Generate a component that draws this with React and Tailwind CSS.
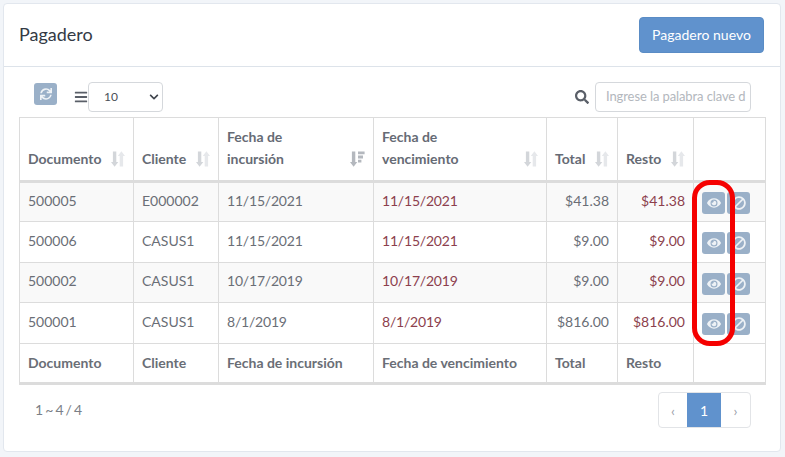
import React from "react";
import { FaSync, FaBars, FaSearch, FaEye, FaBan, FaChevronDown } from "react-icons/fa";

const rows = [
  { doc: "500005", client: "E000002", date: "11/15/2021", due: "11/15/2021", total: "$41.38", rest: "$41.38" },
  { doc: "500006", client: "CASUS1", date: "11/15/2021", due: "11/15/2021", total: "$9.00", rest: "$9.00" },
  { doc: "500002", client: "CASUS1", date: "10/17/2019", due: "10/17/2019", total: "$9.00", rest: "$9.00" },
  { doc: "500001", client: "CASUS1", date: "8/1/2019", due: "8/1/2019", total: "$816.00", rest: "$816.00" },
];

// both arrows of the sort glyph, down one a bit darker
const SortIcon = () => (
  <svg width="14" height="16" viewBox="0 0 14 16" className="block shrink-0">
    <path d="M1.9 0.5h3.4v10.5h2L3.6 15.7 0 11h1.9z" fill="#d3d6da" />
    <path d="M8.7 15.5h3.4V5h1.9L10.4 0.3 6.8 5h1.9z" fill="#e6e8eb" />
  </svg>
);

const SortDescIcon = () => (
  <svg width="15" height="16" viewBox="0 0 15 16" className="block shrink-0">
    <path d="M1.9 0.5h3.4v10.5h2L3.6 15.7 0 11h1.9z" fill="#b4b8be" />
    <path d="M8 0.5h6.6v2.8H8zM8 4.6h5v2.8H8zM8 8.7h3.4v2.8H8z" fill="#b4b8be" />
  </svg>
);

const HeadCell = ({ children, icon = <SortIcon /> }) => (
  <th className="border border-[#dcdcdc] border-b-[3px] px-2 pb-[10px] pt-0 align-bottom text-[14px] font-bold leading-[22px] text-[#666b75]">
    <div className="flex items-end justify-between">
      <span className="text-left">{children}</span>
      <span className="pb-[3px] pl-1">{icon}</span>
    </div>
  </th>
);

const ActionButton = ({ children }) => (
  <span className="flex h-[22px] w-[23px] items-center justify-center rounded-[3px] bg-[#9ab0c8] text-[#eef2f6]">
    {children}
  </span>
);

export default function App() {
  return (
    <div className="relative h-[457px] w-[785px] overflow-hidden bg-[#f2f5f9] pl-[3px] pt-[3px] font-['Lato',sans-serif]">
      <div className="h-[449px] w-[778px] rounded-[4px] border border-[#e2e7ee] bg-white">
        <div className="flex h-[63px] items-center justify-between border-b border-[#dde3ea] pl-[15px] pr-[16px]">
          <h1 className="mt-[-2px] text-[18px] font-normal text-[#343a45]">Pagadero</h1>
          <button className="mt-[-1px] h-[36px] w-[125px] rounded-[4px] border border-[#5a8cc5] bg-[#6092cd] text-[14px] text-white">
            Pagadero nuevo
          </button>
        </div>

        <div className="flex h-[50px] items-end justify-between pb-[5px] pl-[30px] pr-[29px]">
          <div className="flex items-center">
            <span className="mb-[6px] mr-[17px] flex h-[22px] w-[23px] items-center justify-center rounded-[3px] bg-[#9ab0c8] text-[#eef2f6]">
              <FaSync size={12} />
            </span>
            <FaBars size={14} className="text-[#5a5f68]" />
            <div className="flex h-[30px] w-[75px] items-center justify-between rounded-[4px] border border-[#d5d8dc] pl-[15px] pr-[3px] text-[12px] text-[#4a4f58]">
              <span>10</span>
              <FaChevronDown size={10} className="text-[#3f444c]" />
            </div>
          </div>
          <div className="flex items-center">
            <FaSearch size={14} className="mr-[6px] text-[#5a5f68]" />
            <div className="flex h-[30px] w-[156px] items-center overflow-hidden whitespace-nowrap rounded-[4px] border border-[#d5d8dc] pl-[10px] text-[13px] tracking-[-0.1px] text-[#b3b7bd]">
              Ingrese la palabra clave d
            </div>
          </div>
        </div>

        <div className="pl-[15px]">
          <table className="w-[746px] table-fixed border-collapse text-[14px] text-[#6a6e76]">
            <colgroup>
              <col className="w-[114px]" />
              <col className="w-[85px]" />
              <col className="w-[155px]" />
              <col className="w-[173px]" />
              <col className="w-[71px]" />
              <col className="w-[76px]" />
              <col className="w-[72px]" />
            </colgroup>
            <thead>
              <tr className="h-[64px]">
                <HeadCell>Documento</HeadCell>
                <HeadCell>Cliente</HeadCell>
                <HeadCell icon={<SortDescIcon />}>Fecha de<br />incursión</HeadCell>
                <HeadCell>Fecha de<br />vencimiento</HeadCell>
                <HeadCell>Total</HeadCell>
                <HeadCell>Resto</HeadCell>
                <th className="border border-[#dcdcdc] border-b-[3px]" />
              </tr>
            </thead>
            <tbody>
              {rows.map((r, i) => (
                <tr key={r.doc} className={i % 2 === 0 ? "h-[40px] bg-[#f9f9f9]" : "h-[41px] bg-white"}>
                  <td className="border border-[#dcdcdc] px-2 pb-[4px]">{r.doc}</td>
                  <td className="border border-[#dcdcdc] px-2 pb-[4px]">{r.client}</td>
                  <td className="border border-[#dcdcdc] px-2 pb-[4px] tracking-[-0.2px]">{r.date}</td>
                  <td className="border border-[#dcdcdc] px-2 pb-[4px] tracking-[-0.2px] text-[#8c3f4d]">{r.due}</td>
                  <td className="border border-[#dcdcdc] px-2 pb-[4px] text-right">{r.total}</td>
                  <td className="border border-[#dcdcdc] px-2 pb-[4px] text-right text-[#8c3f4d]">{r.rest}</td>
                  <td className="border border-[#dcdcdc] pl-[8px]">
                    <div className="flex gap-[2px] pt-[2px]">
                      <ActionButton><FaEye size={14} /></ActionButton>
                      <ActionButton><FaBan size={14} className="-scale-x-100" /></ActionButton>
                    </div>
                  </td>
                </tr>
              ))}
              <tr className="h-[40px] font-bold">
                <td className="border border-[#dcdcdc] border-b-[3px] px-2 pb-[2px]">Documento</td>
                <td className="border border-[#dcdcdc] border-b-[3px] px-2 pb-[2px]">Cliente</td>
                <td className="border border-[#dcdcdc] border-b-[3px] px-2 pb-[2px]">Fecha de incursión</td>
                <td className="border border-[#dcdcdc] border-b-[3px] px-2 pb-[2px]">Fecha de vencimiento</td>
                <td className="border border-[#dcdcdc] border-b-[3px] px-2 pb-[2px]">Total</td>
                <td className="border border-[#dcdcdc] border-b-[3px] px-2 pb-[2px]">Resto</td>
                <td className="border border-[#dcdcdc] border-b-[3px]" />
              </tr>
            </tbody>
          </table>
        </div>

        <div className="flex items-start justify-between pl-[31px] pr-[29px] pt-[7px]">
          <span className="pt-[7px] text-[14px] text-[#7b7f87] [word-spacing:-1.5px]">1 ~ 4 / 4</span>
          <div className="flex h-[36px] overflow-hidden rounded-[4px] border border-[#e2e4e7] text-[14px]">
            <span className="flex w-[28px] items-center justify-center text-[#9aa0aa]">‹</span>
            <span className="flex w-[34px] items-center justify-center bg-[#6092cd] text-white">1</span>
            <span className="flex w-[29px] items-center justify-center text-[#9aa0aa]">›</span>
          </div>
        </div>
      </div>

      {/* red highlight drawn over the action column */}
      <div className="absolute left-[692px] top-[180px] h-[166px] w-[43px] rounded-[18px] border-[5px] border-[#f50000]" />
    </div>
  );
}
